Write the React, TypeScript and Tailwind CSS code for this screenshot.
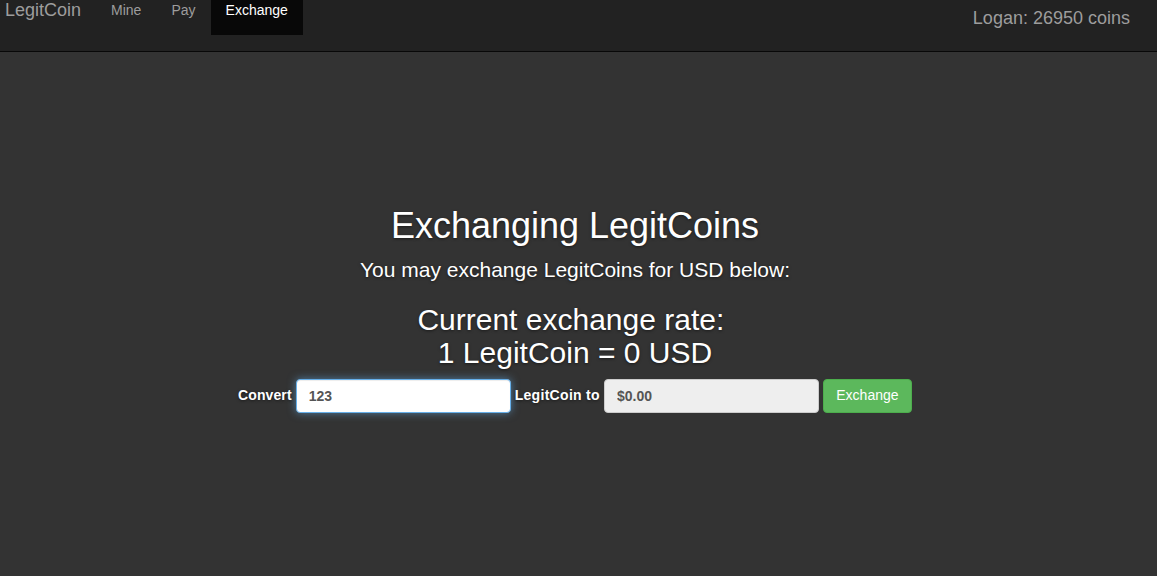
import React from 'react';

export default function App() {
  return (
    <div className="min-h-[576px] w-full bg-[#333333] text-white font-['Liberation_Sans',Arial,sans-serif] [text-shadow:0_1px_3px_rgba(0,0,0,0.5)]">
      {/* Navbar */}
      <nav className="h-[52px] bg-[#222222] border-b border-[#080808] flex items-start justify-between [text-shadow:none]">
        <div className="flex items-start">
          <a className="pl-[5px] pr-[15px] text-[18px] leading-5 text-[#9d9d9d]">LegitCoin</a>
          <div className="flex">
            <a className="h-[35px] px-[15px] text-[14px] leading-5 text-[#9d9d9d]">Mine</a>
            <a className="h-[35px] px-[15px] text-[14px] leading-5 text-[#9d9d9d]">Pay</a>
            <a className="h-[35px] px-[15px] text-[14px] leading-5 text-white bg-[#080808]">Exchange</a>
          </div>
        </div>
        <div className="pt-[8px] pr-[27px] text-[18px] leading-5 text-[#9d9d9d]">Logan: 26950 coins</div>
      </nav>

      {/* Content */}
      <main className="flex flex-col items-center pt-[154px] pr-[7px]">
        <h1 className="text-[36px] leading-[1.1]">Exchanging LegitCoins</h1>
        <p className="mt-[9px] text-[21px] leading-[1.4]">You may exchange LegitCoins for USD below:</p>
        <h2 className="mt-[19px] text-[30px] leading-[1.1] text-center">
          Current exchange rate:{'\u00a0'}
          <br />
          1 LegitCoin = 0 USD
        </h2>
        <form className="mt-[10px] flex items-center gap-[4px] text-[14px]">
          <label className="font-bold tracking-[0.1px]">Convert</label>
          <input
            defaultValue="123"
            className="w-[215px] h-[34px] px-[12px] rounded-[4px] bg-white border border-[#66afe9] text-[#555] font-bold outline-none shadow-[inset_0_1px_1px_rgba(0,0,0,0.075),0_0_8px_rgba(102,175,233,0.6)] [text-shadow:none]"
          />
          <label className="font-bold tracking-[0.3px]">LegitCoin to</label>
          <input
            disabled
            value="$0.00"
            className="w-[215px] h-[34px] px-[12px] rounded-[4px] bg-[#eeeeee] border border-[#cccccc] text-[#555] font-bold [text-shadow:none]"
          />
          <button
            type="button"
            className="h-[34px] w-[89px] rounded-[4px] bg-[#5cb85c] border border-[#4cae4c] text-white text-[14px] [text-shadow:none]"
          >
            Exchange
          </button>
        </form>
      </main>
    </div>
  );
}
